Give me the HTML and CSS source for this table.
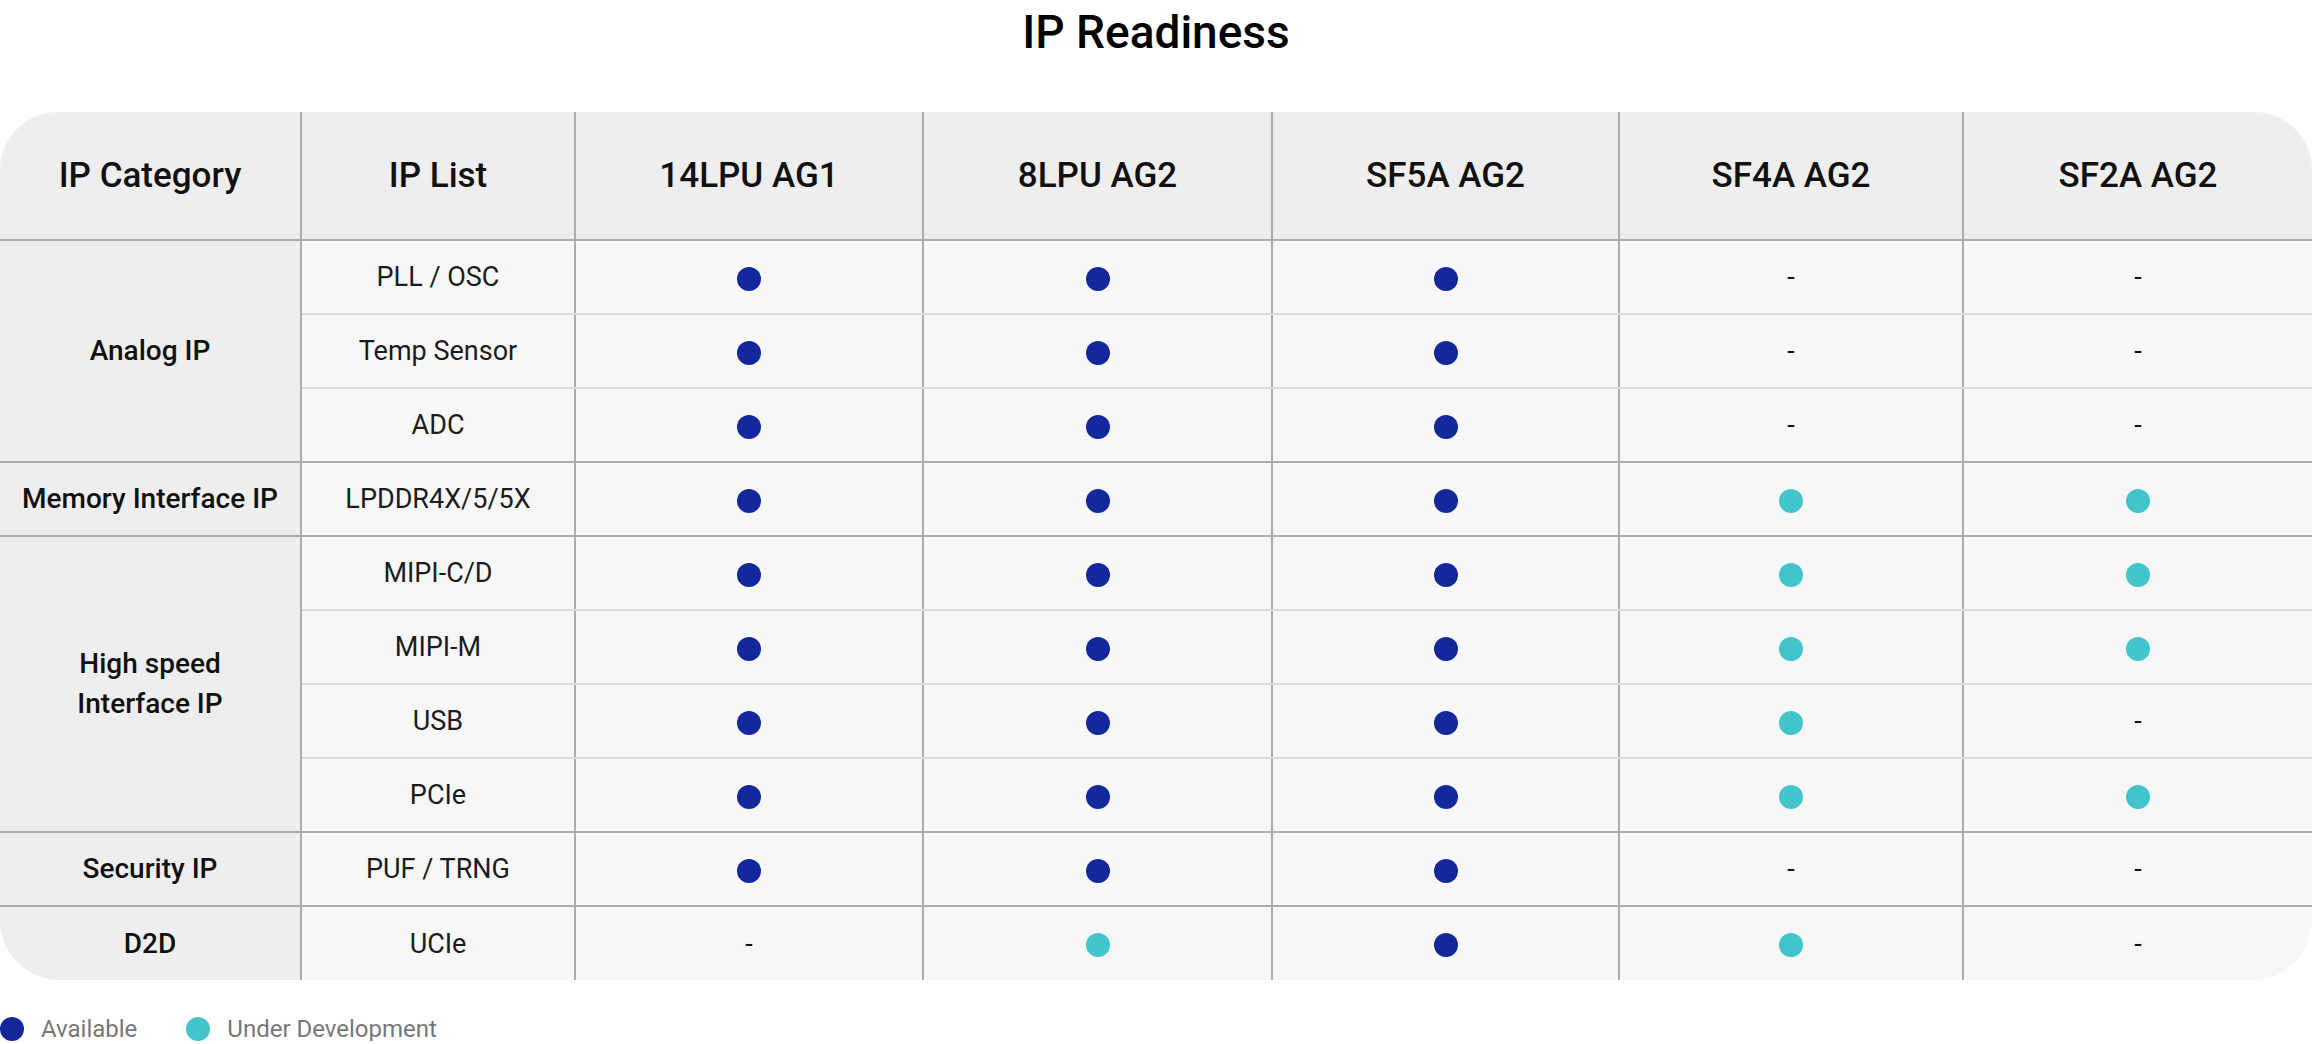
FILE: index.html
```html
<!DOCTYPE html>
<html lang="en">
<head>
<meta charset="utf-8">
<title>IP Readiness</title>
<link rel="stylesheet" href="styles.css">
</head>
<body>
<h1 class="title">IP Readiness</h1>
<div class="table-wrap">
  <table class="grid">
    <colgroup>
      <col class="c-cat"><col class="c-list"><col class="c-node"><col class="c-node2"><col class="c-node3"><col class="c-node4"><col class="c-node5">
    </colgroup>
    <thead>
      <tr class="head">
        <th>IP Category</th><th>IP List</th><th>14LPU AG1</th><th>8LPU AG2</th><th>SF5A AG2</th><th>SF4A AG2</th><th class="last">SF2A AG2</th>
      </tr>
    </thead>
    <tbody>
      <tr class="inner">
        <td class="cat group-end" rowspan="3">Analog IP</td>
        <td>PLL / OSC</td><td><span class="dot av"></span></td><td><span class="dot av"></span></td><td><span class="dot av"></span></td><td><span class="dash">-</span></td><td class="last"><span class="dash">-</span></td>
      </tr>
      <tr class="inner">
        <td>Temp Sensor</td><td><span class="dot av"></span></td><td><span class="dot av"></span></td><td><span class="dot av"></span></td><td><span class="dash">-</span></td><td class="last"><span class="dash">-</span></td>
      </tr>
      <tr class="end">
        <td>ADC</td><td><span class="dot av"></span></td><td><span class="dot av"></span></td><td><span class="dot av"></span></td><td><span class="dash">-</span></td><td class="last"><span class="dash">-</span></td>
      </tr>
      <tr class="end">
        <td class="cat">Memory Interface IP</td>
        <td>LPDDR4X/5/5X</td><td><span class="dot av"></span></td><td><span class="dot av"></span></td><td><span class="dot av"></span></td><td><span class="dot dev"></span></td><td class="last"><span class="dot dev"></span></td>
      </tr>
      <tr class="inner">
        <td class="cat group-end" rowspan="4">High speed<br>Interface IP</td>
        <td>MIPI-C/D</td><td><span class="dot av"></span></td><td><span class="dot av"></span></td><td><span class="dot av"></span></td><td><span class="dot dev"></span></td><td class="last"><span class="dot dev"></span></td>
      </tr>
      <tr class="inner">
        <td>MIPI-M</td><td><span class="dot av"></span></td><td><span class="dot av"></span></td><td><span class="dot av"></span></td><td><span class="dot dev"></span></td><td class="last"><span class="dot dev"></span></td>
      </tr>
      <tr class="inner">
        <td>USB</td><td><span class="dot av"></span></td><td><span class="dot av"></span></td><td><span class="dot av"></span></td><td><span class="dot dev"></span></td><td class="last"><span class="dash">-</span></td>
      </tr>
      <tr class="end">
        <td>PCIe</td><td><span class="dot av"></span></td><td><span class="dot av"></span></td><td><span class="dot av"></span></td><td><span class="dot dev"></span></td><td class="last"><span class="dot dev"></span></td>
      </tr>
      <tr class="end">
        <td class="cat">Security IP</td>
        <td>PUF / TRNG</td><td><span class="dot av"></span></td><td><span class="dot av"></span></td><td><span class="dot av"></span></td><td><span class="dash">-</span></td><td class="last"><span class="dash">-</span></td>
      </tr>
      <tr class="final">
        <td class="cat">D2D</td>
        <td>UCIe</td><td><span class="dash">-</span></td><td><span class="dot dev"></span></td><td><span class="dot av"></span></td><td><span class="dot dev"></span></td><td class="last"><span class="dash">-</span></td>
      </tr>
    </tbody>
  </table>
</div>
<div class="legend">
  <span class="dot av"></span><span class="legend-label">Available</span>
  <span class="dot dev legend-gap"></span><span class="legend-label">Under Development</span>
</div>
</body>
</html>
```
FILE: styles.css
```css
html, body {
  margin: 0;
  padding: 0;
  background: #ffffff;
}

body {
  font-family: Roboto, "Liberation Sans", Arial, sans-serif;
  color: #1a1a1a;
  width: 2312px;
}

.title {
  margin: 0 0 48px 0;
  font-size: 46px;
  line-height: 64px;
  font-weight: 500;
  text-align: center;
  color: #000000;
}

.table-wrap {
  border-radius: 58px 58px 60px 60px;
  overflow: hidden;
}

.grid {
  width: 2312px;
  table-layout: fixed;
  border-collapse: collapse;
  border-spacing: 0;
}

.c-cat { width: 301px; }
.c-list { width: 274px; }
.c-node { width: 348px; }
.c-node2 { width: 349px; }
.c-node3 { width: 347px; }
.c-node4 { width: 344px; }
.c-node5 { width: 349px; }

.grid th,
.grid td {
  padding: 0;
  text-align: center;
  vertical-align: middle;
  border-right: 2px solid #acacac;
}

.grid th.last,
.grid td.last {
  border-right: none;
}

.head th {
  height: 127px;
  background: #eeeeee;
  font-size: 35px;
  font-weight: 500;
  color: #111111;
  border-bottom: 2px solid #acacac;
}

.grid tbody td {
  height: 72px;
  background: #f7f7f7;
  font-size: 27px;
  line-height: 40px;
  font-weight: 400;
  color: #1c1c1c;
}

.grid tbody tr.final td {
  height: 73px;
}

.grid tbody tr.inner td {
  border-bottom: 2px solid #dddddd;
}

.grid tbody tr.end td {
  border-bottom: 2px solid #acacac;
}

.grid tbody td.cat {
  background: #eeeeee;
  font-size: 28px;
  font-weight: 500;
  color: #111111;
}

.grid tbody td.cat.group-end {
  border-bottom: 2px solid #acacac;
}

.dot {
  display: inline-block;
  width: 24px;
  height: 24px;
  border-radius: 50%;
  vertical-align: middle;
}

.dot.av { background: #14289c; }
.dot.dev { background: #41c5ca; }

.dash {
  font-size: 27px;
  color: #111111;
}

.legend {
  display: flex;
  align-items: center;
  height: 24px;
  margin-top: 37px;
}

.legend-label {
  margin-left: 17px;
  font-size: 24px;
  line-height: 24px;
  color: #777777;
}

.legend-gap {
  margin-left: 49px;
}
```
